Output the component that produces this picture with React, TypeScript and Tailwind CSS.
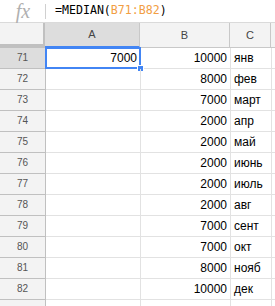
import React from "react";

const ROWS: [number, number | null, string][] = [
  [71, 10000, "янв"],
  [72, 8000, "фев"],
  [73, 7000, "март"],
  [74, 2000, "апр"],
  [75, 2000, "май"],
  [76, 2000, "июнь"],
  [77, 2000, "июль"],
  [78, 2000, "авг"],
  [79, 7000, "сент"],
  [80, 7000, "окт"],
  [81, 8000, "нояб"],
  [82, 10000, "дек"],
];

export default function App() {
  return (
    <div className="w-[275px] h-[306px] overflow-hidden bg-white font-['Liberation_Sans',Arial,sans-serif] text-black">
      {/* Formula bar */}
      <div className="flex h-[23px] items-center border-b border-[#dadada]">
        <div className="flex w-[45px] justify-center pl-[1px] font-['Liberation_Serif',serif] text-[20px] italic leading-none text-[#b0b0b0]">
          fx
        </div>
        <div className="h-[15px] w-px bg-[#d0d0d0]" />
        <div className="pl-[9px] font-['DejaVu_Sans_Mono',monospace] text-[11.6px] leading-none">
          =MEDIAN(<span className="text-[#f29e43]">B71:B82</span>)
        </div>
      </div>

      {/* Column headers */}
      <div className="flex h-[25px] text-[11px] text-[#444]">
        <div className="w-[46px] shrink-0 border-r-[3px] border-b-[4px] border-[#c0c0c0] bg-[#f3f3f3]" />
        <div className="flex w-[95px] shrink-0 items-center justify-center border-r border-b-2 border-r-[#c8c8c8] border-b-[#4285f4] bg-[#dddddd] -ml-[1px]">
          A
        </div>
        <div className="flex w-[90px] shrink-0 items-center justify-center border-r border-b border-[#c8c8c8] bg-[#f3f3f3]">
          B
        </div>
        <div className="flex w-[41px] shrink-0 items-center justify-center border-r border-b border-[#c8c8c8] bg-[#f3f3f3]">
          C
        </div>
        <div className="flex-1 border-b border-[#c8c8c8] bg-[#f3f3f3]" />
      </div>

      {/* Rows */}
      {ROWS.map(([n, b, c], i) => (
        <div key={n} className="flex h-[21px] text-[12px] leading-none">
          <div
            className={`flex w-[46px] shrink-0 items-center justify-center border-r border-b border-[#c0c0c0] text-[10px] text-[#555] ${
              i === 0 ? "bg-[#dddddd]" : "bg-[#f3f3f3]"
            }`}
          >
            {n}
          </div>
          <div className="relative flex w-[95px] shrink-0 items-center justify-end border-r border-b border-[#e2e2e2] pr-[3px]">
            {i === 0 && (
              <>
                7000
                <div className="absolute -top-px -left-px -right-px -bottom-px border-2 border-[#4285f4]" />
                <div className="absolute -right-[4px] -bottom-[4px] h-[7px] w-[7px] border border-white bg-[#4285f4]" />
              </>
            )}
          </div>
          <div className="flex w-[90px] shrink-0 items-center justify-end border-r border-b border-[#e2e2e2] pr-[3px]">
            {b}
          </div>
          <div className="flex w-[41px] shrink-0 items-center border-r border-b border-[#e2e2e2] pl-[3px]">
            {c}
          </div>
          <div className="flex-1 border-b border-[#e2e2e2]" />
        </div>
      ))}

      {/* Partially visible next row */}
      <div className="flex h-[21px]">
        <div className="w-[46px] shrink-0 border-r border-[#c0c0c0] bg-[#f3f3f3]" />
        <div className="w-[95px] shrink-0 border-r border-[#e2e2e2]" />
        <div className="w-[90px] shrink-0 border-r border-[#e2e2e2]" />
        <div className="w-[41px] shrink-0 border-r border-[#e2e2e2]" />
        <div className="flex-1" />
      </div>
    </div>
  );
}
